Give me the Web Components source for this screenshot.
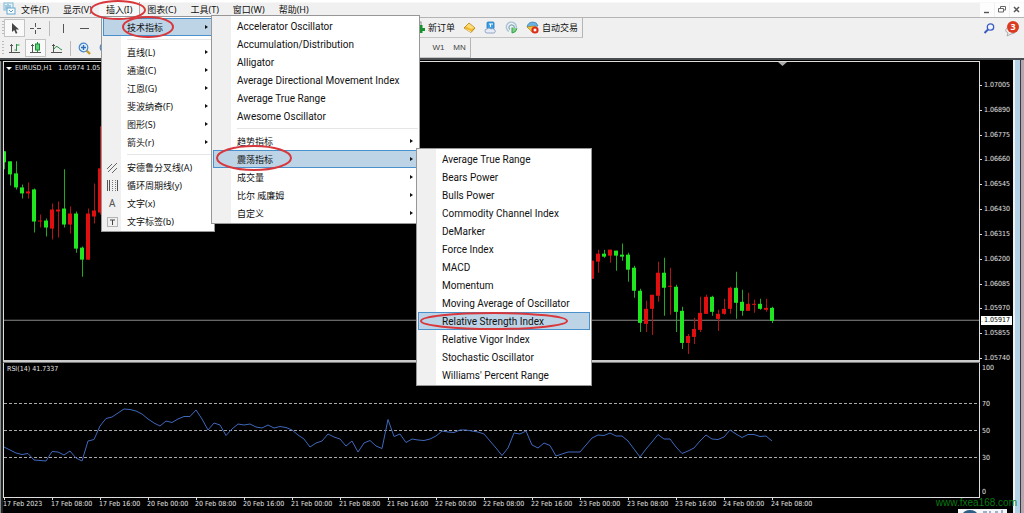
<!DOCTYPE html>
<html>
<head>
<meta charset="utf-8">
<title>EURUSD,H1</title>
<style>
html,body{height:100%;margin:0}
body{font-family:"Noto Sans","Noto Sans CJK SC",sans-serif;font-size:9px;color:#111;overflow:hidden}
</style>
</head>
<body>
<mt-app></mt-app>
<script>
const define=(name,html,after)=>customElements.define(name,class extends HTMLElement{
  constructor(){super();this.attachShadow({mode:'open'}).innerHTML=html;}
  connectedCallback(){if(after&&!this.ready){this.ready=true;after(this,this.shadowRoot);}}
});

const ICONS={
 app:'<rect x="1" y="1" width="9" height="7" fill="#e8f5fc" stroke="#7fb4d2"/><path d="M3 3v4M5 2v4M7 3v4" stroke="#5b9fc7"/><rect x="4" y="6" width="8" height="6" fill="#f6fbfe" stroke="#6aa5c8"/><path d="M6 8l2 2 2-2" fill="none" stroke="#5b9fc7"/>',
 cursor:'<path d="M4 1v9l2.2-2 1.6 3.7 1.6-.8L7.8 7.4H11z" fill="#444"/>',
 cross:'<path d="M6.5 1v4M6.5 8v4M1 6.5h4M8 6.5h4" stroke="#555"/>',
 vline:'<path d="M6.5 2v9" stroke="#555"/>',
 hline:'<path d="M2 6.5h9" stroke="#555"/>',
 bars:'<path d="M3.5 2v9M1 10.5h11M2 3.5h3" stroke="#555" fill="none"/><path d="M8.5 2v7M8.5 3h3M6.5 8h2" stroke="#2a9147" fill="none"/>',
 candles:'<path d="M3.5 2v9M1 10.5h11M2 3.5h3" stroke="#555" fill="none"/><path d="M8.5 0v10" stroke="#178b36"/><rect x="6.5" y="2" width="4" height="6" fill="#5fd479" stroke="#178b36"/>',
 line:'<path d="M3.5 2v9M1 10.5h11M2 3.5h3" stroke="#555" fill="none"/><path d="M4 7Q6 3 8 5T12 8" stroke="#2a9147" fill="none"/>',
 plus:'<path d="M8 8l4 4" stroke="#c79a2a" stroke-width="2.4"/><circle cx="5.5" cy="5.5" r="4.3" fill="#dff0fc" stroke="#4a86c5" stroke-width="1.2"/><path d="M3 5.5h5M5.5 3v5" stroke="#2b6cb8" stroke-width="1.4"/>',
 minus:'<path d="M8 8l4 4" stroke="#c79a2a" stroke-width="2.4"/><circle cx="5.5" cy="5.5" r="4.3" fill="#dff0fc" stroke="#4a86c5" stroke-width="1.2"/><path d="M3 5.5h5" stroke="#2b6cb8" stroke-width="1.4"/>',
 order:'<rect x="2" y="1" width="7" height="9" fill="#fff" stroke="#888"/><path d="M9 4v8M5 8.5h8" stroke="#15922b" stroke-width="3"/>',
 gold:'<path d="M1 7l5-5 6 5-4 4.5z" fill="#f0b92c" stroke="#b07a10" stroke-width=".8"/><path d="M6 2.4l5.4 4.4L8 8 3 5.4z" fill="#fbdc74"/><path d="M1 7l6.6 3 .4 1.5z" fill="#fff3c8"/>',
 server:'<rect x="3" y="1" width="7" height="7" rx="1" fill="#3ca0e6" stroke="#2277bb" stroke-width=".8"/><path d="M5 3h4M6.5 3v3" stroke="#fff"/><path d="M3 12a2 2 0 0 1 0-4q2-2 4 0 2-1 3 .4a1.9 1.9 0 0 1 0 3.6z" fill="#e6edf8" stroke="#8195bb" stroke-width=".8"/>',
 signal:'<path d="M4 10.5a5 5 0 1 1 6-1" fill="none" stroke="#a9c4d4" stroke-width="1.4"/><path d="M5 8.5a2.6 2.6 0 1 1 4-1" fill="none" stroke="#7fa9bd" stroke-width="1.2"/><path d="M7 6.5v5.5q4-.4 5-4.5" fill="#7ed08a" stroke="#2fa147"/>',
 auto:'<path d="M1 6q1-5 6-5 4 0 5 4z" fill="#69b3e3" stroke="#3278ac" stroke-width=".7"/><path d="M1 6l5 5 5-4-3-2z" fill="#f0c544" stroke="#b58a1d" stroke-width=".7"/><circle cx="9" cy="9" r="3.6" fill="#dd2b14"/><rect x="7.7" y="7.7" width="2.6" height="2.6" fill="#fff"/>',
 search:'<circle cx="7.5" cy="5" r="3.2" fill="#eef3ff" stroke="#3a5bc0" stroke-width="1.3"/><path d="M5 7.5L1.5 11" stroke="#3a5bc0" stroke-width="2"/>',
 fork:'<path d="M2 11l9-9M1 8l5-5M6 12l5-5" stroke="#666"/>',
 cycle:'<path d="M1.5 1v11M3.5 1v11M11.5 1v11" stroke="#555"/><path d="M6.5 1v11M9.5 1v11" stroke="#777" stroke-dasharray="1 1"/>',
 label:'<rect x="1.5" y="2.5" width="10" height="9" fill="none" stroke="#777" stroke-dasharray="1 1"/><path d="M4 5h5M6.5 5v5" stroke="#444"/>',
 min:'<path d="M4 9.5h5" stroke="#555" stroke-width="1.4"/>',
 restore:'<path d="M5.5 5V3.5h5v3.5h-2M3.5 5.5h5v3.5h-5z" fill="none" stroke="#666"/>',
 close:'<path d="M4 4l5 5M9 4l-5 5" stroke="#555" stroke-width="1.5"/>'
};

define('mt-icon','<style>:host{display:block;flex:none;width:13px;height:13px}svg{display:block}</style><svg width="13" height="13" viewBox="0 0 13 13" aria-hidden="true"></svg>',
 (el,r)=>{r.querySelector('svg').innerHTML=ICONS[el.getAttribute('name')];});

/* One tool button: an icon, a text, or both */
define('mt-tool',`<style>
:host{display:block;flex:none}
button{all:unset;box-sizing:border-box;display:flex;align-items:center;justify-content:center;height:18px;min-width:21px;gap:3px;white-space:nowrap}
:host([pressed]) button{background:#f9f9f9;border:1px solid #c4c4c4}
</style><button type="button"><slot></slot></button>`,(el,r)=>{
 if(el.title)r.querySelector('button').setAttribute('aria-label',el.title);});

define('mt-toolbar',`<style>
:host{display:flex;align-items:center;height:20px;background:#f0f0f0}
.left,.right{display:flex;align-items:center;box-sizing:border-box;height:20px}
.left{flex:none;width:412px;overflow:hidden}
.left::before{content:"";width:2px;height:14px;margin:0 0 0 2px;background:repeating-linear-gradient(#bbb 0 1px,#f0f0f0 1px 3px)}
.right{border-right:1px solid #b5b5b5;border-bottom:1px solid #c4c4c4}
.end{display:flex;margin-left:auto;align-items:center}
</style><div class="left"><slot></slot></div><div class="right"><slot name="right"></slot></div><div class="end"><slot name="end"></slot></div>`);

define('mt-menubar',`<style>
:host{display:flex;align-items:center;box-sizing:border-box;height:18px;padding:0 0 0 3px;background:linear-gradient(#fff 0 2px,#f0f0f0 3px);border-bottom:1px solid #b4b4b4}
nav{display:flex;margin-left:-2px}
button{all:unset;box-sizing:border-box;height:15px;line-height:14px;padding:0 7px;margin-top:2px;white-space:nowrap}
.open{background:#f8f8f8;border-right:1px solid #aaa}
.win{display:flex;gap:1px;margin-left:auto}
.win button{padding:0;width:14px;height:14px;background:#fdfdfd}
</style><mt-icon name="app"></mt-icon><nav role="menubar"><button>文件(F)</button><button>显示(V)</button><button class="open">插入(I)</button><button>图表(C)</button><button>工具(T)</button><button>窗口(W)</button><button>帮助(H)</button></nav>
<div class="win"><button aria-label="Minimize"><mt-icon name="min"></mt-icon></button><button aria-label="Restore"><mt-icon name="restore"></mt-icon></button><button aria-label="Close"><mt-icon name="close"></mt-icon></button></div>`);

define('mt-menu',`<style>
:host{display:block;box-sizing:border-box;padding:1px;border:1px solid #979797;background:linear-gradient(90deg,#f0f0f0 0 19px,#fff 19px)}
</style><div role="menu"><slot></slot></div>`);
define('mt-sep','<style>:host{display:block;padding:3px 0}hr{margin:0 0 0 24px;border:0;height:1px;background:#e6e6e6}</style><hr>');
define('mt-item',`<style>
:host{display:block}
button{all:unset;box-sizing:border-box;display:flex;align-items:center;width:100%;height:18px;border:1px solid transparent;white-space:nowrap}
.ico{flex:none;width:23px;box-sizing:border-box;padding-left:2px;display:flex;font-size:10px;color:#555}
:host([on]) button{background:#bdd3e6;border-color:#4a90cc}
.arrow{display:none;margin:0 4px 0 auto;border:2px solid transparent;border-left:3px solid #111;border-right:0}
:host([sub]) .arrow{display:block}
</style><button type="button" role="menuitem"><span class="ico"><slot name="icon"></slot></span><slot></slot><span class="arrow"></span></button>`);

/* Candles: [x, body top, body bottom, wick top, wick bottom, rising] */
const C=[[4,151,162,151,169,0],[10,161,174,161,185,0],[16,173,187,161,189,0],[22,187,193,184,198,0],[28,191,193,182,198,1],[34,189,221,188,232,0],[40,220,221,214,227,1],[46,220,227,218,236,0],[52,209,228,203,239,1],[58,209,211,201,237,1],[64,208,224,169,227,0],[70,213,224,206,233,1],[76,213,248,211,252,0],[82,247,259,246,276,0],[88,213,259,208,259,1],[94,210,216,183,223,1],[100,168,212,126,214,1],
[592,260,278,260,278,1],[598,253,261,249,272,1],[604,253,256,249,257,0],[610,249,255,249,262,1],[616,250,255,250,270,0],[622,254,256,243,260,0],[628,254,269,252,281,0],[634,267,290,265,297,0],[640,290,322,288,331,0],[646,308,323,300,331,1],[652,294,308,294,334,1],[658,272,295,261,301,1],[664,272,287,257,315,0],[670,285,286,267,314,1],[676,286,311,284,331,0],[682,310,342,306,348,0],[688,335,342,333,353,1],[694,328,336,317,343,1],[700,312,329,296,331,1],[706,296,313,294,313,1],[712,296,311,295,315,0],[718,313,318,309,330,1],[724,308,313,298,314,1],[730,287,308,286,313,1],[736,287,302,271,318,0],[742,301,310,289,315,0],[748,303,310,292,310,1],[754,303,304,299,312,1],[760,303,308,298,309,0],[766,307,309,298,311,1],[772,307,320,306,322,0]];
/* RSI values on the pane's vertical scale, one per bar */
const RSI=[447,450,453,454.5,453.5,460,460.5,461,451.5,452,455,451,458,461,441,439.5,426,418.5,417,413,409,409.5,411,414,419,423,426,421,422.5,419,416.5,416.5,410,419,430,423,425,435.5,429,424,425,424,427,428,425,428,426.5,427.5,430,435,439,447,443,441,434,437,439,446,441,452,443,440.5,446,448.5,419.5,436.5,434,442.5,439,440,440.5,439,436,431,432,432.5,430,430,431,432,434,441,448,455.5,448,433,434,431,445,448,443,445.5,456,454,452,452,452,445,438,435,435.5,433,436,436,441,449,457,449,442,434.5,439,439,447,453.5,451,448,441,435,439,439.5,437,430,434,437.5,434.5,434.5,436.5,436,441];
const PRICES=['1.07005','1.06890','1.06775','1.06660','1.06545','1.06430','1.06315','1.06200','1.06085','1.05970','1.05855','1.05740'];
const TIMES=['17 Feb 2023','17 Feb 08:00','17 Feb 16:00','20 Feb 00:00','20 Feb 08:00','20 Feb 16:00','21 Feb 00:00','21 Feb 08:00','21 Feb 16:00','22 Feb 00:00','22 Feb 08:00','22 Feb 16:00','23 Feb 00:00','23 Feb 08:00','23 Feb 16:00','24 Feb 00:00','24 Feb 08:00'];

define('mt-chart',`<style>
:host{display:grid;min-height:0;grid-template-columns:minmax(0,1fr) 33px;grid-template-rows:302fr 135fr 15px;background:#000;color:#e4e4e4;font:7px/10px "DejaVu Sans Condensed","DejaVu Sans",sans-serif}
.pane{position:relative;min-height:0;border:1px solid #ddd;box-sizing:border-box}
.price{border-bottom:2px solid #ccc;margin-bottom:1px;box-shadow:0 1px #777}
.rsi{border-top:0}
svg{display:block;position:absolute;inset:0;width:100%;height:100%}
.title{position:absolute;left:3px;top:1px;white-space:pre;display:flex}
.title i{border:3px solid transparent;border-top-color:#fff;border-bottom:0;height:0;margin:4px 3px 0 -1px}
ul{list-style:none;margin:0;padding:0;display:flex;flex-direction:column;position:relative}
.prices{justify-content:space-between;padding-top:19px}
.prices li{padding-left:4px;position:relative}
.prices li::before{content:"";position:absolute;left:0;top:5px;width:2px;height:1px;background:#ddd}
.prices .tag{position:absolute;left:1px;right:1px;top:84.4%;height:9px;line-height:9px;padding-left:3px;background:#fff;color:#000}
.levels li{padding-left:2px;flex:var(--n) 0 0}
.times{display:grid;grid-column:1/3;grid-template-columns:repeat(16,48fr) 242fr;white-space:nowrap}
.times span{position:relative;line-height:12px}
.times span::before{content:"";position:absolute;left:1px;top:0;width:1px;height:2px;background:#ddd}
</style>
<div class="pane price"><svg viewBox="4 62 975 297" preserveAspectRatio="none"><path d="M4 319.5H979" stroke="#888"/><g id="c"></g><path d="M778 62h9l-4.5 4z" fill="#aaa"/></svg><div class="title"><i></i>EURUSD,H1   1.05974 1.05</div></div>
<ul class="prices"></ul>
<div class="pane rsi"><svg viewBox="4 363 975 134" preserveAspectRatio="none"><path d="M4 403.5H979M4 430.5H979M4 457.5H979" stroke="#aaa" stroke-dasharray="3 2"/><polyline fill="none" stroke="#3f68bd"/></svg><div class="title">RSI(14) 41.7337</div></div>
<ul class="levels"><li style="--n:36">100</li><li style="--n:27">70</li><li style="--n:27">50</li><li style="--n:34">30</li><li style="--n:11">0</li></ul>
<div class="times"></div>`,(el,r)=>{
 r.querySelector('#c').innerHTML=C.map(([x,a,b,t,w,up])=>{const f=up?'#e01010':'#1fe61f',d=up?'#b01414':'#22a822';
  return `<path d="M${x+.5} ${t}V${w}" stroke="${d}"/><rect x="${x-2}" y="${a}" width="4" height="${b-a}" fill="${f}"/>`;}).join('');
 r.querySelector('polyline').setAttribute('points',RSI.map((y,i)=>(4+i*6)+','+y).join(' '));
 r.querySelector('.prices').innerHTML=PRICES.map(p=>`<li>${p}</li>`).join('')+'<li class="tag">1.05917</li>';
 r.querySelector('.times').innerHTML=TIMES.map(t=>`<span>${t}</span>`).join('');
});

define('mt-app',`<style>
:host{display:flex;flex-direction:column;height:100%;position:relative;overflow:hidden}
.work{flex:1;min-height:0;display:grid;grid-template-columns:3px minmax(0,1fr) 11px;box-sizing:border-box;border-top:2px solid #4a4d50;background:#000;padding-top:1px}
.edge{background:linear-gradient(90deg,#8a8f94 1px,#222 1px)}
.frame{margin-top:-1px;background:linear-gradient(90deg,#eef3f6 0 2px,#b4d2e6 2px 7px,#3a3a40 7px 8px,#b9a5ad 8px)}
mt-menu{position:absolute}
.m1{left:101px;top:16px;width:114px}
.m2{left:211px;top:15px;width:209px}
.m3{left:416px;top:148px;width:176px}
.en{font-family:Roboto,sans-serif;font-size:10px}
.rings{position:absolute;left:0;top:0;pointer-events:none}
.vs{width:1px;height:15px;background:#bbb;margin:0 3px}
.tf{color:#444;font-size:8px;font-family:"Liberation Sans",sans-serif}
.note{position:relative;width:20px;height:18px}
.note svg{display:block}
.note b{position:absolute;left:3px;top:2px;width:12px;height:12px;border-radius:50%;background:#dc3a20;color:#fff;font-size:9px;line-height:12px;text-align:center}
.mark{position:absolute;right:7px;bottom:4px;color:#0a7a12;font:10px/12px "Liberation Sans",sans-serif;text-decoration:none}
.badge{position:absolute;right:17px;bottom:0;width:49px;height:4px;background:#f4f6f8}
.badge svg{display:block}
</style>
<mt-menubar></mt-menubar>
<mt-toolbar>
 <mt-tool pressed title="Cursor"><mt-icon name="cursor"></mt-icon></mt-tool><mt-tool title="Crosshair"><mt-icon name="cross"></mt-icon></mt-tool><span class="vs"></span><mt-tool title="Vertical line"><mt-icon name="vline"></mt-icon></mt-tool><mt-tool title="Horizontal line"><mt-icon name="hline"></mt-icon></mt-tool>
 <mt-tool slot="right"><mt-icon name="order"></mt-icon>新订单</mt-tool>
 <span slot="right" style="width:4px"></span>
 <mt-tool slot="right" title="Market"><mt-icon name="gold"></mt-icon></mt-tool><mt-tool slot="right" title="VPS"><mt-icon name="server"></mt-icon></mt-tool><mt-tool slot="right" title="Signals"><mt-icon name="signal"></mt-icon></mt-tool><span slot="right" style="width:4px"></span><mt-tool slot="right"><mt-icon name="auto"></mt-icon>自动交易</mt-tool><span slot="right" style="width:4px"></span>
 <mt-tool slot="end" title="Search"><mt-icon name="search"></mt-icon></mt-tool>
 <span slot="end" style="width:4px"></span>
 <div slot="end" class="note"><svg width="14" height="18"><path d="M3 9q-3 3 1 5l-1 3 4-2q4 0 5-3" fill="#eee" stroke="#aaa"/></svg><b>3</b></div>
</mt-toolbar>
<mt-toolbar>
 <mt-tool title="Bars"><mt-icon name="bars"></mt-icon></mt-tool><mt-tool pressed title="Candles"><mt-icon name="candles"></mt-icon></mt-tool><mt-tool title="Line"><mt-icon name="line"></mt-icon></mt-tool><span class="vs"></span><mt-tool title="Zoom in"><mt-icon name="plus"></mt-icon></mt-tool><mt-tool title="Zoom out"><mt-icon name="minus"></mt-icon></mt-tool>
 <span slot="right" style="width:16px"></span><mt-tool slot="right" class="tf">W1</mt-tool><mt-tool slot="right" class="tf">MN</mt-tool>
</mt-toolbar>
<div class="work"><div class="edge"></div><mt-chart></mt-chart><div class="frame"></div></div>
<a class="mark" href="#">www.fxea168.com</a>
<div class="badge"><svg width="49" height="4"><ellipse cx="12" cy="5" rx="7" ry="4" fill="#2c5d84"/><path d="M25 3h4M32 2v2M37 3h3M44 1v3" stroke="#456a9a"/></svg></div>
<mt-menu class="m1"><mt-item on sub>技术指标</mt-item><mt-sep></mt-sep><mt-item sub>直线(L)</mt-item><mt-item sub>通道(C)</mt-item><mt-item sub>江恩(G)</mt-item><mt-item sub>斐波纳奇(F)</mt-item><mt-item sub>图形(S)</mt-item><mt-item sub>箭头(r)</mt-item><mt-sep></mt-sep><mt-item><mt-icon slot="icon" name="fork"></mt-icon>安德鲁分叉线(A)</mt-item><mt-item><mt-icon slot="icon" name="cycle"></mt-icon>循环周期线(y)</mt-item><mt-item><span slot="icon" style="padding-left:3px">A</span>文字(x)</mt-item><mt-item><mt-icon slot="icon" name="label"></mt-icon>文字标签(b)</mt-item></mt-menu>
<mt-menu class="m2"><mt-item class="en">Accelerator Oscillator</mt-item><mt-item class="en">Accumulation/Distribution</mt-item><mt-item class="en">Alligator</mt-item><mt-item class="en">Average Directional Movement Index</mt-item><mt-item class="en">Average True Range</mt-item><mt-item class="en">Awesome Oscillator</mt-item><mt-sep></mt-sep><mt-item sub>趋势指标</mt-item><mt-item on sub>震荡指标</mt-item><mt-item sub>成交量</mt-item><mt-item sub>比尔 威廉姆</mt-item><mt-item sub>自定义</mt-item></mt-menu>
<mt-menu class="m3 en"><mt-item>Average True Range</mt-item><mt-item>Bears Power</mt-item><mt-item>Bulls Power</mt-item><mt-item>Commodity Channel Index</mt-item><mt-item>DeMarker</mt-item><mt-item>Force Index</mt-item><mt-item>MACD</mt-item><mt-item>Momentum</mt-item><mt-item>Moving Average of Oscillator</mt-item><mt-item on>Relative Strength Index</mt-item><mt-item>Relative Vigor Index</mt-item><mt-item>Stochastic Oscillator</mt-item><mt-item>Williams' Percent Range</mt-item></mt-menu>
<svg class="rings" width="600" height="340" fill="none" stroke="#d8383c" stroke-width="2"><ellipse cx="118" cy="10" rx="27" ry="9"/><ellipse cx="148" cy="27" rx="25" ry="10"/><ellipse cx="254" cy="158" rx="37" ry="12"/><ellipse cx="494" cy="321" rx="73" ry="8"/></svg>`);
</script>
</body>
</html>
